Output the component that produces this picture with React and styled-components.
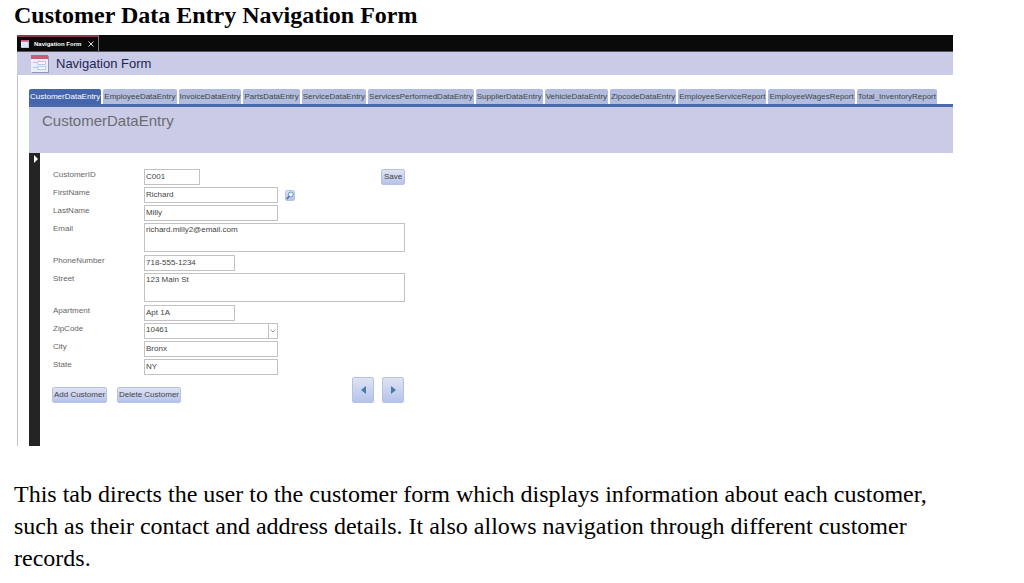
import React from "react";
import styled, { createGlobalStyle } from "styled-components";

const Global = createGlobalStyle`
  * { box-sizing: border-box; }
  body { margin: 0; background: #fff; }
  button, input, textarea, select { font: inherit; margin: 0; }
`;

const Page = styled.main`
  padding: 0 71px 8px 14px;
  font-family: "Liberation Serif", "Times New Roman", serif;
  font-size: 24px;
  color: #000;
`;

const Heading = styled.h1`
  margin: 0;
  padding-top: 1px;
  font-size: 24px;
  line-height: 29px;
  font-weight: 700;
`;

const Description = styled.p`
  margin: 32px 0 0;
  line-height: 32px;
`;

const Window = styled.section`
  margin: 5px 0 0 3px;
  font-family: "Liberation Sans", Arial, sans-serif;
  font-size: 8px;
  line-height: 12px;
  color: #444;
`;

const TitleBar = styled.div`
  display: flex;
  height: 17px;
  background: #0a0a0a;
  border-bottom: 1px solid #555;
`;

const DocumentTab = styled.div`
  display: flex;
  align-items: center;
  gap: 5px;
  width: 82px;
  padding-left: 4px;
  border-top: 2px solid #8c3a48;
  border-right: 1px solid #777;
  color: #fff;
  font-size: 6px;
  font-weight: 700;
  white-space: nowrap;
`;

const CloseButton = styled.button`
  display: flex;
  padding: 0;
  margin-left: 2px;
  border: 0;
  background: none;
`;

const Header = styled.header`
  display: flex;
  align-items: center;
  gap: 7px;
  height: 23px;
  padding-left: 14px;
  background: #cacbe7;
  color: #222752;
`;

const HeaderTitle = styled.h2`
  margin: 0;
  font-size: 13px;
  line-height: 20px;
  font-weight: 400;
`;

const Body = styled.div`
  padding: 14px 0 0 11px;
  border-left: 1px solid #c4c4c4;
`;

const Tabs = styled.nav`
  display: flex;
  gap: 2px;
  padding-right: 16px;
`;

const TabLink = styled.a`
  flex: 1 1 auto;
  height: 15px;
  border-radius: 2px 2px 0 0;
  background: ${(p) => (p.$active ? "#4565ad" : "#b1bcde")};
  color: ${(p) => (p.$active ? "#fff" : "#444")};
  line-height: 15px;
  text-align: center;
  text-decoration: none;
  white-space: nowrap;
`;

const PaneHeader = styled.div`
  height: 49px;
  padding: 2px 13px;
  border-top: 3px solid #4c69ac;
  background: #cacbe7;
`;

const PaneTitle = styled.h3`
  margin: 0;
  color: #6b6b70;
  font-size: 15px;
  line-height: 24px;
  font-weight: 400;
`;

const Record = styled.div`
  display: flex;
`;

const RecordSelector = styled.div`
  flex: 0 0 11px;
  padding: 2px 0 0 4px;
  background: #242424;
`;

const Form = styled.form`
  flex: 1;
  max-width: 365px;
  padding: 16px 0 43px 13px;
`;

const Row = styled.div`
  display: flex;
  align-items: flex-start;
  height: ${(p) => (p.$tall ? 32 : 18)}px;
`;

const Label = styled.label`
  flex: 0 0 91px;
  color: #666;
`;

const Box = styled.input`
  display: block;
  width: ${(p) => p.$width}px;
  height: 16px;
  padding: 0 1px 2px;
  border: 1px solid #c2c2c2;
  border-radius: 0;
  background: #fff;
  color: #444;
  line-height: 12px;
`;

const Area = styled(Box).attrs({ as: "textarea" })`
  height: 29px;
  resize: none;
  overflow: hidden;
`;

const SelectWrap = styled.div`
  position: relative;
`;

const Choice = styled(Box).attrs({ as: "select" })`
  appearance: none;
`;

const Chevron = styled.span`
  position: absolute;
  right: 0;
  top: 0;
  display: flex;
  align-items: center;
  justify-content: center;
  width: 10px;
  height: 16px;
  border: 1px solid #c2c2c2;
  background: #fff;
  pointer-events: none;
`;

const Button = styled.button`
  display: flex;
  align-items: center;
  justify-content: center;
  width: ${(p) => p.$width}px;
  height: ${(p) => p.$height || 16}px;
  padding: 0;
  border: 1px solid #b7c1e2;
  border-radius: 2px;
  background: linear-gradient(#dfe3f4, #b6c2ea);
  color: #444;
  white-space: nowrap;
`;

const Save = styled(Button)`
  margin-left: auto;
`;

const Search = styled(Button)`
  margin: 3px 0 0 7px;
`;

const Actions = styled.div`
  display: flex;
  align-items: flex-end;
  gap: 10px;
  margin: 0 1px 0 -1px;
`;

const Pager = styled.div`
  display: flex;
  gap: 8px;
  margin-left: auto;
`;

const Icon = styled.svg`
  display: block;
  flex: none;
`;

const FormIcon = ({ size }) => (
  <Icon width={size} height={size} viewBox="0 0 18 18" aria-hidden="true">
    <rect x="1" y="1" width="17" height="17" fill="#9298b5" />
    <rect width="17" height="17" fill="#e9f0fa" />
    <rect width="17" height="4" fill="#c75b7c" />
    <path d="M2 7.5h4M2 12.5h4" stroke="#b5cbe8" />
    <path d="M6.500 6.500h8v3h-8zM6.500 11.500h8v3h-8z" fill="#f5f9ff" stroke="#b5cbe8" />
  </Icon>
);

const Arrow = ({ d, color = "#417db5" }) => (
  <Icon width="5" height="8" viewBox="0 0 5 8" aria-hidden="true">
    <path d={d} fill={color} />
  </Icon>
);

const tabs = [
  "CustomerDataEntry",
  "EmployeeDataEntry",
  "InvoiceDataEntry",
  "PartsDataEntry",
  "ServiceDataEntry",
  "ServicesPerformedDataEntry",
  "SupplierDataEntry",
  "VehicleDataEntry",
  "ZipcodeDataEntry",
  "EmployeeServiceReport",
  "EmployeeWagesReport",
  "Total_InventoryReport",
];

const Field = ({ name, value, width, area, children }) => (
  <Row $tall={area}>
    <Label htmlFor={name}>{name}</Label>
    {area ? (
      <Area id={name} $width={width} defaultValue={value} />
    ) : (
      <Box id={name} $width={width} defaultValue={value} />
    )}
    {children}
  </Row>
);

export default function App() {
  return (
    <Page>
      <Global />
      <Heading>Customer Data Entry Navigation Form</Heading>
      <Window>
        <TitleBar>
          <DocumentTab>
            <FormIcon size={8} />
            <span>Navigation Form</span>
            <CloseButton type="button" aria-label="Close">
              <Icon width="6" height="6" viewBox="0 0 6 6" aria-hidden="true">
                <path d="M.5 .5l5 5M5.500 .5l-5 5" stroke="#ddd" />
              </Icon>
            </CloseButton>
          </DocumentTab>
        </TitleBar>
        <Header>
          <FormIcon size={18} />
          <HeaderTitle>Navigation Form</HeaderTitle>
        </Header>
        <Body>
          <Tabs>
            {tabs.map((t, i) => (
              <TabLink key={t} href={`#${t}`} $active={i === 0}>
                {t}
              </TabLink>
            ))}
          </Tabs>
          <PaneHeader>
            <PaneTitle>CustomerDataEntry</PaneTitle>
          </PaneHeader>
          <Record>
            <RecordSelector>
              <Arrow d="M1 0l4 4-4 4z" color="#fff" />
            </RecordSelector>
            <Form>
              <Field name="CustomerID" value="C001" width={56}>
                <Save type="button" $width={24}>Save</Save>
              </Field>
              <Field name="FirstName" value="Richard" width={134}>
                <Search type="button" $width={10} $height={11} aria-label="Find customer">
                  <Icon width="8" height="9" viewBox="0 0 8 9" aria-hidden="true">
                    <circle cx="4.800" cy="3.500" r="2.500" fill="#eef6ff" stroke="#5f93c9" />
                    <path d="M3.200 5.200L.8 8" stroke="#3f6fae" strokeWidth="1.400" />
                  </Icon>
                </Search>
              </Field>
              <Field name="LastName" value="Milly" width={134} />
              <Field name="Email" value="richard.milly2@email.com" width={261} area />
              <Field name="PhoneNumber" value="718-555-1234" width={91} />
              <Field name="Street" value="123 Main St" width={261} area />
              <Field name="Apartment" value="Apt 1A" width={91} />
              <Row>
                <Label htmlFor="ZipCode">ZipCode</Label>
                <SelectWrap>
                  <Choice id="ZipCode" $width={134}>
                    <option>10461</option>
                  </Choice>
                  <Chevron>
                    <Icon width="6" height="4" viewBox="0 0 6 4" aria-hidden="true">
                      <path d="M.5 .5L3 3 5.500 .5" fill="none" stroke="#999" />
                    </Icon>
                  </Chevron>
                </SelectWrap>
              </Row>
              <Field name="City" value="Bronx" width={134} />
              <Field name="State" value="NY" width={134} />
              <Actions>
                <Button type="button" $width={55}>Add Customer</Button>
                <Button type="button" $width={64}>Delete Customer</Button>
                <Pager>
                  <Button type="button" $width={22} $height={26} aria-label="Previous record">
                    <Arrow d="M5 0L0 4l5 4z" />
                  </Button>
                  <Button type="button" $width={22} $height={26} aria-label="Next record">
                    <Arrow d="M0 0l5 4-5 4z" />
                  </Button>
                </Pager>
              </Actions>
            </Form>
          </Record>
        </Body>
      </Window>
      <Description>
        This tab directs the user to the customer form which displays information about each
        customer, such as their contact and address details. It also allows navigation through
        different customer records.
      </Description>
    </Page>
  );
}
